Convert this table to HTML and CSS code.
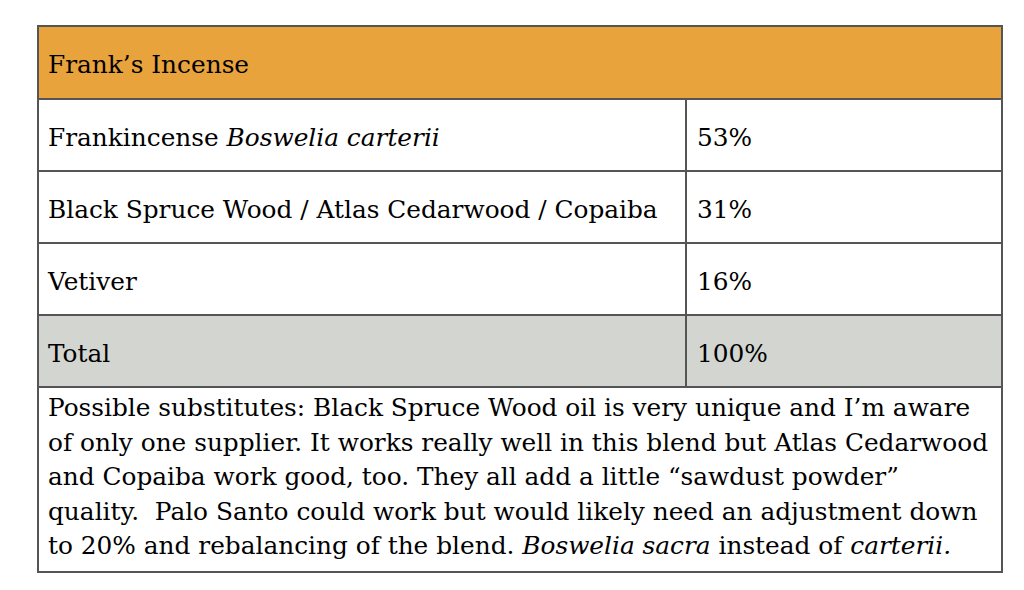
FILE: index.html
```html
<!DOCTYPE html>
<html lang="en">
<head>
<meta charset="utf-8">
<title>Frank’s Incense</title>
<link rel="stylesheet" href="styles.css">
</head>
<body>
<div class="blend">
  <div class="row header">
    <div class="cell full"><span>Frank’s Incense</span></div>
  </div>
  <div class="row">
    <div class="cell name"><span>Frankincense <i>Boswelia carterii</i></span></div>
    <div class="cell pct"><span>53%</span></div>
  </div>
  <div class="row">
    <div class="cell name"><span>Black Spruce Wood / Atlas Cedarwood / Copaiba</span></div>
    <div class="cell pct"><span>31%</span></div>
  </div>
  <div class="row">
    <div class="cell name"><span>Vetiver</span></div>
    <div class="cell pct"><span>16%</span></div>
  </div>
  <div class="row total">
    <div class="cell name"><span>Total</span></div>
    <div class="cell pct"><span>100%</span></div>
  </div>
  <div class="row notes">
    <p class="cell full">Possible substitutes: Black Spruce Wood oil is very unique and I’m aware<br>of only one supplier. It works really well in this blend but Atlas Cedarwood<br>and Copaiba work good, too. They all add a little “sawdust powder”<br>quality.&nbsp; Palo Santo could work but would likely need an adjustment down<br>to 20% and rebalancing of the blend. <i>Boswelia sacra</i> instead of <i>carterii.</i></p>
  </div>
</div>
</body>
</html>
```
FILE: styles.css
```css
html, body {
  margin: 0;
  padding: 0;
  background: #ffffff;
}

body {
  font-family: "DejaVu Serif", "Liberation Serif", serif;
  font-size: 24.8px;
  color: #000000;
}

.blend {
  margin: 25px 0 0 37px;
  width: 966px;
  box-sizing: border-box;
  border: 2px solid #555555;
  display: flex;
  flex-direction: column;
}

.row {
  display: flex;
  height: 72px;
  border-top: 2px solid #555555;
  box-sizing: border-box;
}

.row.header {
  border-top: none;
  height: 71px;
  background: #e8a33d;
}

.row.total {
  background: #d3d5d0;
}

.row.notes {
  height: 185px;
}

.cell {
  display: flex;
  align-items: center;
  padding: 4px 10px 0 9px;
  box-sizing: border-box;
  white-space: nowrap;
}

.cell.full {
  flex: 1;
}

.cell.name {
  width: 637px;
  border-right: 2px solid #555555;
  box-sizing: content-box;
  padding-right: 0;
}

.cell.pct {
  flex: 1;
  padding-left: 10px;
}

.notes .cell {
  display: block;
  margin: 0;
  padding: 3px 10px 0 9px;
  line-height: 34.5px;
}
```
